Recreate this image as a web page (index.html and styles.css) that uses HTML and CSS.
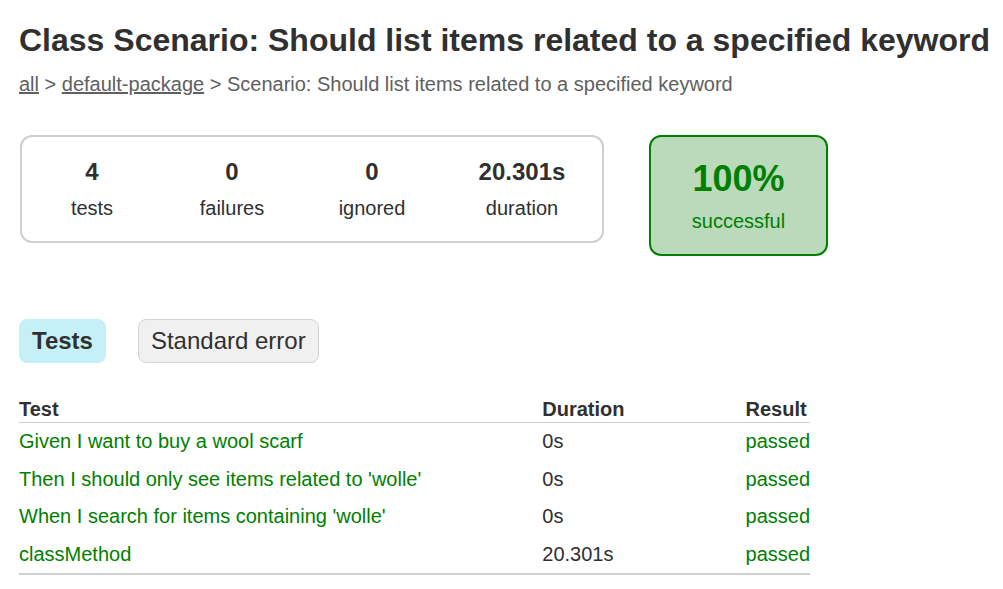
FILE: index.html
```html
<!DOCTYPE html>
<html>
<head>
<meta charset="utf-8">
<title>Test results - Class Scenario: Should list items related to a specified keyword</title>
<link rel="stylesheet" href="styles.css">
</head>
<body>
<div class="content">
  <h1 class="title">Class Scenario: Should list items related to a specified keyword</h1>
  <div class="breadcrumbs"><a href="#">all</a> &gt; <a href="#">default-package</a> &gt; Scenario: Should list items related to a specified keyword</div>

  <div class="summary">
    <div class="summary-group">
      <div class="info-box">
        <div class="counter">4</div>
        <p class="label">tests</p>
      </div>
      <div class="info-box">
        <div class="counter">0</div>
        <p class="label">failures</p>
      </div>
      <div class="info-box">
        <div class="counter">0</div>
        <p class="label">ignored</p>
      </div>
      <div class="info-box info-box-duration">
        <div class="counter">20.301s</div>
        <p class="label">duration</p>
      </div>
    </div>
    <div class="info-box success-rate">
      <div class="percent">100%</div>
      <p class="label">successful</p>
    </div>
  </div>

  <ul class="tab-links">
    <li class="tab-link selected"><a href="#">Tests</a></li>
    <li class="tab-link"><a href="#">Standard error</a></li>
  </ul>

  <table class="results">
    <thead>
      <tr><th>Test</th><th>Duration</th><th>Result</th></tr>
    </thead>
    <tbody>
      <tr><td class="success">Given I want to buy a wool scarf</td><td>0s</td><td class="success">passed</td></tr>
      <tr><td class="success">Then I should only see items related to 'wolle'</td><td>0s</td><td class="success">passed</td></tr>
      <tr><td class="success">When I search for items containing 'wolle'</td><td>0s</td><td class="success">passed</td></tr>
      <tr><td class="success">classMethod</td><td>20.301s</td><td class="success">passed</td></tr>
    </tbody>
  </table>
</div>
</body>
</html>
```

FILE: styles.css
```css
html, body {
  margin: 0;
  padding: 0;
  background: #ffffff;
}

body {
  font-family: "Liberation Sans", Arial, sans-serif;
  font-size: 20px;
  color: #303030;
}

a, a:visited {
  color: #303030;
}

.content {
  padding: 22px 19px 20px 19px;
}

.title {
  font-size: 32px;
  font-weight: bold;
  margin: 0 0 14px 0;
  white-space: nowrap;
}

.breadcrumbs,
.breadcrumbs a {
  color: #606060;
}

.summary {
  display: flex;
  align-items: flex-start;
  margin-top: 39px;
  margin-left: 1px;
}

.summary-group {
  display: flex;
  border: solid 2px #d0d0d0;
  border-radius: 12px;
}

.info-box {
  width: 140px;
  padding: 21px 0 21px 0;
  text-align: center;
}

.info-box-duration {
  width: 160px;
}

.label {
  margin: 0;
}

.counter {
  font-size: 24px;
  font-weight: bold;
  margin-bottom: 11px;
}

.success-rate {
  width: 175px;
  margin-left: 45px;
  border: solid 2px #008000;
  border-radius: 12px;
  background-color: #bbd9bb;
  color: #008000;
}

.percent {
  font-size: 36px;
  font-weight: bold;
  margin-bottom: 10px;
}

.tab-links {
  display: flex;
  list-style: none;
  margin: 0 0 22px 0;
  padding: 63px 0 12px 0;
}

.tab-link {
  padding: 7px 12px 7px 12px;
  margin-right: 32px;
  border: solid 1px #d4d4d4;
  border-radius: 8px;
  background-color: #f0f0f0;
}

.tab-link a {
  font-size: 24px;
  text-decoration: none;
  display: block;
}

.tab-link.selected {
  background-color: #c5f0f5;
  border-color: #c5f0f5;
}

.tab-link.selected a {
  font-weight: bold;
}

.results {
  border-collapse: collapse;
  border-bottom: solid 2px #d0d0d0;
}

.results th {
  text-align: left;
  white-space: nowrap;
  padding: 1px 0 1px 121px;
  border-bottom: solid 1px #d0d0d0;
}

.results td {
  white-space: nowrap;
  padding: 7.25px 0 7.25px 121px;
}

.results th:first-child,
.results td:first-child {
  padding-left: 0;
}

.success {
  color: #008000;
}
```
